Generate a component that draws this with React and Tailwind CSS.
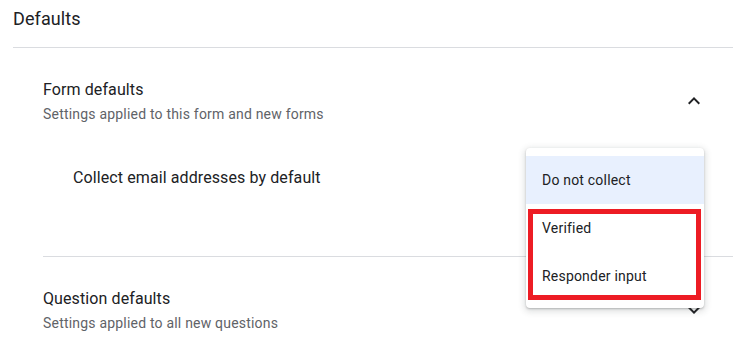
import React from "react";

function ChevronUp() {
  return (
    <svg width="24" height="24" viewBox="0 0 24 24" className="shrink-0" fill="#202124">
      <path d="M12 8l-6 6 1.41 1.41L12 10.83l4.59 4.58L18 14z" />
    </svg>
  );
}

function ChevronDown() {
  return (
    <svg width="24" height="24" viewBox="0 0 24 24" className="shrink-0" fill="#202124">
      <path d="M16.59 8.59L12 13.17 7.41 8.59 6 10l6 6 6-6z" />
    </svg>
  );
}

export default function App() {
  return (
    <div className="relative w-[744px] h-[359px] overflow-hidden bg-white font-['Roboto',sans-serif]">
      <div className="pl-[13px] pr-[11px]">
        <h2 className="pt-[7px] text-[18px] leading-6 tracking-[0.1px] text-[#202124]">Defaults</h2>
        <div className="mt-4 h-px bg-[#dadce0]" />
        <div className="pl-[30px]">
          <section>
            <div className="flex items-center pt-[30px] pr-[27px]">
              <div className="flex-1">
                <div className="text-base leading-6 tracking-[0.1px] text-[#202124]">Form defaults</div>
                <div className="mt-[2px] text-sm leading-5 tracking-[0.2px] text-[#5f6368]">
                  Settings applied to this form and new forms
                </div>
              </div>
              <ChevronUp />
            </div>
            <div className="mt-[42px] pl-[30px] text-base leading-6 tracking-[0.1px] text-[#202124]">
              Collect email addresses by default
            </div>
            <div className="mt-[66px] h-px bg-[#dadce0]" />
          </section>
          <section>
            <div className="flex items-center pt-[30px] pr-[27px]">
              <div className="flex-1">
                <div className="text-base leading-6 tracking-[0.1px] text-[#202124]">Question defaults</div>
                <div className="mt-[2px] text-sm leading-5 tracking-[0.2px] text-[#5f6368]">
                  Settings applied to all new questions
                </div>
              </div>
              <ChevronDown />
            </div>
          </section>
        </div>
      </div>

      <div className="absolute left-[526px] top-[148px] w-[178px] rounded bg-white py-2 shadow-[0_1px_2px_0_rgba(60,64,67,0.3),0_2px_6px_2px_rgba(60,64,67,0.15)]">
        <div className="flex h-12 items-center bg-[#e8f0fe] px-4 text-sm tracking-[0.2px] text-[#202124]">Do not collect</div>
        <div className="flex h-12 items-center px-4 text-sm tracking-[0.2px] text-[#202124]">Verified</div>
        <div className="flex h-12 items-center px-4 text-sm tracking-[0.2px] text-[#202124]">Responder input</div>
      </div>

      <div className="pointer-events-none absolute left-[528px] top-[209px] h-[91px] w-[173px] border-[5px] border-[#ed1c24]" />
    </div>
  );
}
